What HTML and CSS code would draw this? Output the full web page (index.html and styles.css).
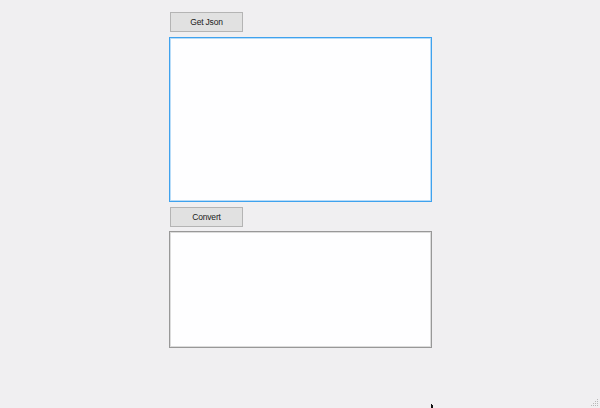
FILE: index.html
```html
<!DOCTYPE html>
<html>
<head>
<meta charset="utf-8">
<link rel="stylesheet" href="styles.css">
</head>
<body>
<div class="form">
  <div class="btn">Get Json</div>
  <div class="box box-focus"></div>
  <div class="btn btn-second">Convert</div>
  <div class="box box-out"></div>
</div>
<svg class="cursor" width="4" height="4" viewBox="0 0 4 4"><path d="M0 0 L1 0 L1 1 L2 1 L2 4 L0 4 Z" fill="#111"/></svg>
<svg class="grip" width="8" height="8" viewBox="0 0 8 8">
  <g fill="#b8b8b8">
    <rect x="6" y="0" width="1" height="1"/>
    <rect x="4" y="2" width="1" height="1"/><rect x="6" y="2" width="1" height="1"/>
    <rect x="2" y="4" width="1" height="1"/><rect x="4" y="4" width="1" height="1"/><rect x="6" y="4" width="1" height="1"/>
    <rect x="0" y="6" width="1" height="1"/><rect x="2" y="6" width="1" height="1"/><rect x="4" y="6" width="1" height="1"/><rect x="6" y="6" width="1" height="1"/>
  </g>
</svg>
</body>
</html>
```
FILE: styles.css
```css
html, body {
  margin: 0;
  padding: 0;
  width: 600px;
  height: 408px;
  overflow: hidden;
  background: #f0eff1;
  font-family: "Liberation Sans", Arial, sans-serif;
}
.form {
  display: flex;
  flex-direction: column;
  align-items: flex-start;
  padding: 12px 0 0 169px;
}
.btn {
  box-sizing: border-box;
  width: 73px;
  height: 20px;
  margin: 0 0 0 1px;
  border: 1px solid #b4b4b4;
  background: #e1e1e1;
  color: #1a1a1a;
  font-size: 8.5px;
  font-weight: normal;
  line-height: 18px;
  letter-spacing: -0.2px;
  text-align: center;
}
.btn-second {
  margin-top: 5px;
}
.box {
  box-sizing: border-box;
  width: 263px;
  margin-top: 5px;
  background: #fefeff;
}
.box-focus {
  height: 165px;
  border: 1px solid #3fa2ee;
  box-shadow: inset 0 0 0 1px #b8dcf8;
}
.box-out {
  height: 117px;
  margin-top: 4px;
  border: 1px solid #989898;
  box-shadow: inset 0 0 0 1px #dcdcdc;
}
.cursor {
  position: absolute;
  left: 431px;
  top: 404px;
}
.grip {
  position: absolute;
  left: 591px;
  top: 399px;
}
```
